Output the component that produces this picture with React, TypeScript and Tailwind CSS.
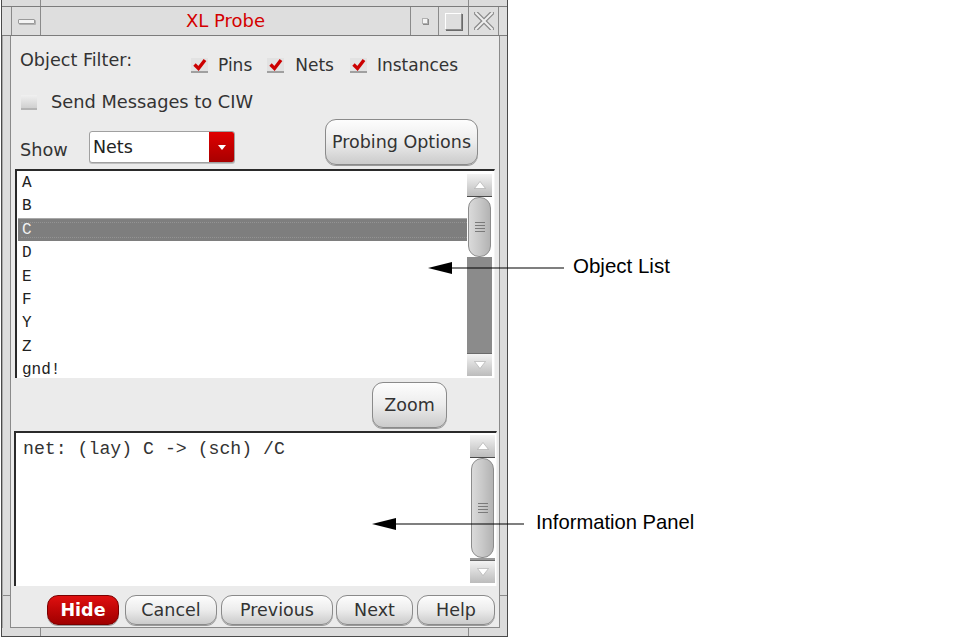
import React from "react";

const SANS = "[font-family:'DejaVu_Sans','Liberation_Sans',sans-serif]";
const MONO = "[font-family:'Liberation_Mono','DejaVu_Sans_Mono',monospace]";

function RedCheck() {
  return (
    <svg width="17" height="15" viewBox="0 0 17 15">
      <rect x="0" y="0" width="17" height="15" fill="#e2e2e2" />
      <rect x="0" y="13" width="17" height="2" fill="#a0a0a0" />
      <path d="M3.5 6.5 L7.5 10.5 L14 2" stroke="#cc0000" strokeWidth="3.4" fill="none" strokeLinejoin="miter" />
    </svg>
  );
}

function ArrowBtn({ up, h }: { up: boolean; h: string }) {
  return (
    <div
      className={
        "flex items-center justify-center bg-linear-to-b from-[#f3f3f3] to-[#bcbcbc] " +
        h +
        (up ? " border-b border-[#4a4a4a]" : " border-t border-[#6a6a6a]")
      }
    >
      <svg width="12" height="8" viewBox="0 0 12 8">
        <path d={up ? "M6 0.5 L11.5 7.5 L0.5 7.5 Z" : "M0.5 0.5 L11.5 0.5 L6 7.5 Z"} fill="#ffffff" stroke="#a8a8a8" strokeWidth="0.6" />
      </svg>
    </div>
  );
}

function Thumb({ h }: { h: string }) {
  return (
    <div
      className={
        "mx-[1px] rounded-[11px] border border-[#8c8c8c] bg-linear-to-r from-[#dadada] via-[#c8c8c8] to-[#b3b3b3] flex flex-col items-center justify-center gap-[2px] " +
        h
      }
    >
      <div className="w-[10px] h-px bg-[#7a7a7a]" />
      <div className="w-[10px] h-px bg-[#7a7a7a]" />
      <div className="w-[10px] h-px bg-[#7a7a7a]" />
      <div className="w-[10px] h-px bg-[#7a7a7a]" />
    </div>
  );
}

function Btn({ label, cls }: { label: string; cls: string }) {
  return (
    <div
      className={
        "flex items-center justify-center rounded-[11px] border border-[#8a8a8a] bg-linear-to-b from-[#fdfdfd] via-[#ececec] to-[#cbcbcb] text-[17.5px] text-[#333] shadow-[0_1px_0_#9a9a9a] " +
        cls
      }
    >
      {label}
    </div>
  );
}

const ITEMS = ["A", "B", "C", "D", "E", "F", "Y", "Z", "gnd!"];

export default function App() {
  return (
    <div className={"relative w-[962px] h-[644px] bg-white overflow-hidden " + SANS}>
      {/* window */}
      <div className="ml-[1px] w-[507px] h-[637px] flex flex-col border-l border-r border-b border-[#4a4a4a] bg-[#dcdcdc]">
        {/* top strip */}
        <div className="h-[7px] flex border-b border-[#7c7c7c]">
          <div className="w-[39px] border-r border-[#8a8a8a]" />
          <div className="flex-1 border-r border-[#8a8a8a]" />
          <div className="w-[38px]" />
        </div>
        {/* title bar */}
        <div className="h-[29px] flex pl-[9px] pr-[8px] border-b border-[#7c7c7c] bg-[#dedede]">
          <div className="w-[30px] border-l border-r border-[#8a8a8a] flex items-center justify-center">
            <div className="w-[17px] h-[5px] rounded-[1px] border border-[#9a9a9a] bg-[#f4f4f4] shadow-[1px_1px_0_#b0b0b0]" />
          </div>
          <div className="flex-1 flex items-center justify-center text-[18px] text-[#d40000] leading-none">
            XL Probe
          </div>
          <div className="w-[28px] border-l border-[#8a8a8a] flex items-center justify-center">
            <div className="w-[6px] h-[6px] bg-[#f4f4f4] border border-[#b0b0b0] shadow-[1px_1px_0_#8a8a8a]" />
          </div>
          <div className="w-[30px] border-l border-[#8a8a8a] flex items-center justify-center">
            <div className="w-[17px] h-[17px] border border-t-white border-l-white border-r-[#8a8a8a] border-b-[#8a8a8a] shadow-[1px_1px_0_#6a6a6a]" />
          </div>
          <div className="w-[31px] border-l border-r border-[#8a8a8a] flex items-center justify-center">
            <svg width="20" height="18" viewBox="0 0 20 18">
              <path d="M2 1 L18 17 M18 1 L2 17" stroke="#8a8a8a" strokeWidth="4.5" strokeLinecap="square" />
              <path d="M2 1 L18 17 M18 1 L2 17" stroke="#efefef" strokeWidth="2" strokeLinecap="square" />
            </svg>
          </div>
        </div>
        {/* middle */}
        <div className="flex h-[592px]">
          <div className="w-[8px] border-l border-[#a8a8a8] flex flex-col">
            <div className="h-[560px] border-b border-[#8a8a8a]" />
          </div>
          <div className="w-[490px] flex flex-col border-l border-r border-b border-[#8a8a8a] bg-[#ebebeb]">
            {/* row 1 */}
            <div className="h-[46px] flex items-start">
              <div className="ml-[9px] mt-[14px] w-[171px] text-[17.6px] leading-[20px] text-[#333]">Object Filter:</div>
              <div className="mt-[19px] flex items-center text-[17px] leading-[20px] text-[#333]">
                <RedCheck />
                <span className="ml-[10px]">Pins</span>
                <span className="ml-[15px]"><RedCheck /></span>
                <span className="ml-[11px]">Nets</span>
                <span className="ml-[16px]"><RedCheck /></span>
                <span className="ml-[10px]">Instances</span>
              </div>
            </div>
            {/* row 2 */}
            <div className="h-[34px] pt-[6px] flex items-center">
              <div className="ml-[10px] w-[16px] h-[15px] bg-linear-to-b from-[#f0f0f0] to-[#d0d0d0] border-b-2 border-[#b4b4b4]" />
              <div className="ml-[14px] text-[17.8px] leading-[20px] text-[#333]">Send Messages to CIW</div>
            </div>
            {/* row 3 */}
            <div className="h-[53px] flex items-start">
              <div className="ml-[9px] mt-[24px] w-[69px] text-[17.7px] leading-[20px] text-[#333]">Show</div>
              <div className="mt-[15px] w-[146px] h-[32px] flex rounded-[3px] border border-[#a0a0a0] bg-white overflow-hidden shadow-[0_1px_0_#c0c0c0]">
                <div className="flex-1 pl-[3px] flex items-center text-[17.5px] text-[#222]">Nets</div>
                <div className="w-[25px] bg-linear-to-b from-[#e00000] to-[#a80000] flex items-center justify-center">
                  <svg width="8" height="5" viewBox="0 0 8 5">
                    <path d="M0 0 L8 0 L4 5 Z" fill="#ffffff" />
                  </svg>
                </div>
              </div>
              <Btn label="Probing Options" cls="ml-[90px] mt-[3px] w-[153px] h-[46px]" />
            </div>
            {/* object list */}
            <div className="ml-[4px] w-[480px] h-[209px] flex border-t-2 border-l-2 border-[#2a2a2a] border-r border-r-[#f4f4f4] bg-white">
              <div className={"flex-1 flex flex-col text-[16px] text-[#222] " + MONO}>
                {ITEMS.map((it) =>
                  it === "C" ? (
                    <div key={it} className="h-[23.4px] shrink-0 bg-[#7e7e7e] border-t border-[#a8a8a8] pl-[3px] py-[3px] ml-[1px]">
                      <div className="h-full border-y border-dotted border-[#939393] pl-[1px] flex items-center text-[#f2f2f2]">C</div>
                    </div>
                  ) : (
                    <div key={it} className="h-[23.4px] shrink-0 pl-[5px] pt-[1px] leading-[23.4px]">
                      {it}
                    </div>
                  )
                )}
              </div>
              <div className="w-[25px] mr-[2px] pt-[3px] pb-[2px] flex flex-col">
                <ArrowBtn up h="h-[23px]" />
                <Thumb h="h-[60px]" />
                <div className="flex-1 bg-[#8b8b8b]" />
                <ArrowBtn up={false} h="h-[23px]" />
              </div>
            </div>
            {/* zoom row */}
            <div className="h-[53px] flex items-start">
              <Btn label="Zoom" cls="ml-[361px] mt-[4px] w-[75px] h-[46px]" />
            </div>
            {/* info panel */}
            <div className="ml-[3px] w-[483px] h-[155px] flex border-t-2 border-l-2 border-[#2a2a2a] border-r border-r-[#f4f4f4] bg-white">
              <div className={"flex-1 pl-[7px] pt-[6px] text-[18.2px] leading-[20px] text-[#333] whitespace-pre " + MONO}>
                net: (lay) C -&gt; (sch) /C
              </div>
              <div className="w-[25px] mr-[1px] pt-[2px] pb-[3px] flex flex-col">
                <ArrowBtn up h="h-[23px]" />
                <Thumb h="h-[100px]" />
                <div className="flex-1 bg-[#9a9a9a]" />
                <ArrowBtn up={false} h="h-[23px]" />
              </div>
            </div>
            {/* button row */}
            <div className="h-[41px] flex items-start pt-[9px]">
              <div className="ml-[36px] w-[72px] h-[30px] flex items-center justify-center rounded-[11px] border border-[#7a0000] bg-linear-to-b from-[#e01010] to-[#a00000] text-[17.5px] font-bold text-white shadow-[0_1px_0_#9a9a9a]">
                Hide
              </div>
              <Btn label="Cancel" cls="ml-[6px] w-[92px] h-[30px]" />
              <Btn label="Previous" cls="ml-[4px] w-[112px] h-[30px]" />
              <Btn label="Next" cls="ml-[3px] w-[77px] h-[30px]" />
              <Btn label="Help" cls="ml-[4px] w-[78px] h-[30px]" />
            </div>
          </div>
          <div className="w-[7px] flex flex-col">
            <div className="h-[560px] border-b border-[#8a8a8a]" />
          </div>
        </div>
        {/* bottom strip */}
        <div className="h-[8px] flex">
          <div className="w-[39px] border-r border-[#8a8a8a]" />
          <div className="flex-1 border-r border-[#8a8a8a]" />
          <div className="w-[38px]" />
        </div>
      </div>

      {/* annotations */}
      <svg className="absolute left-[426px] top-[261px]" width="140" height="14" viewBox="0 0 140 14">
        <path d="M2 7 L26 1 L26 13 Z" fill="#000" />
        <rect x="25" y="6.5" width="113" height="1" fill="#000" />
      </svg>
      <div className="absolute left-[573px] top-[254px] text-[20.5px] leading-[24px] text-black [font-family:'Liberation_Sans',Arial,sans-serif]">
        Object List
      </div>
      <svg className="absolute left-[370px] top-[517px]" width="156" height="14" viewBox="0 0 156 14">
        <path d="M2 7 L26 1 L26 13 Z" fill="#000" />
        <rect x="25" y="6.5" width="129" height="1" fill="#000" />
      </svg>
      <div className="absolute left-[536px] top-[510px] text-[20.2px] leading-[24px] text-black [font-family:'Liberation_Sans',Arial,sans-serif]">
        Information Panel
      </div>
    </div>
  );
}
